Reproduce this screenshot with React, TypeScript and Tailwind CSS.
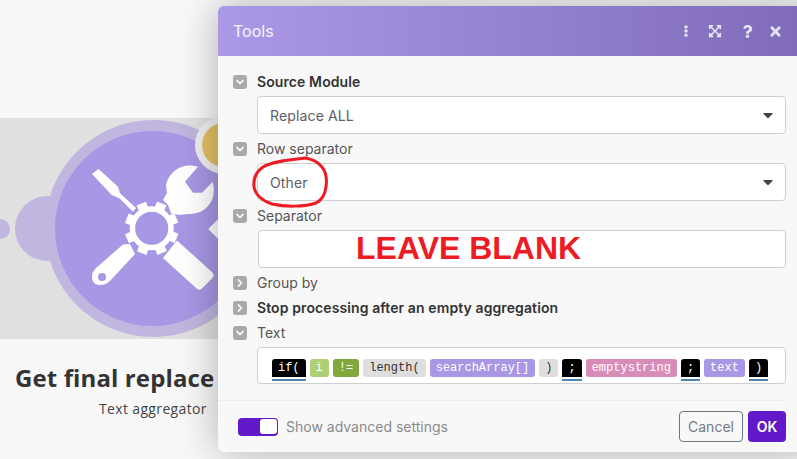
import { ChevronDown, ChevronRight } from "lucide-react"
import { FaCaretDown, FaEllipsisV, FaExpandArrowsAlt, FaQuestion, FaTimes } from "react-icons/fa"

const tokens = [
  { text: "if(", cls: "bg-black text-white", mark: true },
  { text: "i", cls: "bg-[#add076] text-white" },
  { text: "!=", cls: "bg-[#80a83c] text-white" },
  { text: "length(", cls: "bg-[#dedede] text-[#333]" },
  { text: "searchArray[]", cls: "bg-[#a897e4] text-white" },
  { text: ")", cls: "bg-[#dedede] text-[#333]" },
  { text: ";", cls: "bg-black text-white", mark: true },
  { text: "emptystring", cls: "bg-[#d88cb8] text-white" },
  { text: ";", cls: "bg-black text-white", mark: true },
  { text: "text", cls: "bg-[#a897e4] text-white" },
  { text: ")", cls: "bg-black text-white", mark: true },
]

function Toggle({ open }: { open: boolean }) {
  return (
    <span className="flex h-[14px] w-[14px] shrink-0 items-center justify-center rounded-[3px] bg-[#aaaaaa] text-white">
      {open ? <ChevronDown size={12} strokeWidth={3.5} /> : <ChevronRight size={12} strokeWidth={3.5} />}
    </span>
  )
}

function Label({ text, open = true, bold = false }: { text: string; open?: boolean; bold?: boolean }) {
  return (
    <div className="flex h-[25px] items-center gap-[10px]">
      <Toggle open={open} />
      <span className={`text-sm ${bold ? "font-semibold tracking-[0.1px] text-[#333]" : "text-[#555]"}`}>{text}</span>
    </div>
  )
}

function Select({ value }: { value: string }) {
  return (
    <div className="ml-6 flex h-[38px] items-center justify-between rounded-[4px] border border-[#cfcfcf] bg-white pl-3 pr-[9px] text-sm tracking-[0.14px] text-[#5c6068]">
      <span className="pt-0.5">{value}</span>
      <FaCaretDown size={16} className="text-[#444]" />
    </div>
  )
}

function ToolsIcon() {
  return (
    <svg viewBox="0 0 150 150" className="h-[150px] w-[150px]" fill="#fff">
      <path d="M12 24 L18.5 19 L38 36.7 L40 43.3 L56 58 L53 61.7 L39.3 48.3 L31.7 45 Z" />
      <path d="M43 94.5 L50 94 L55 104 L30 131 C24 137 12 137 12 127 C12 122 14 121 16 118 Z" />
      <circle cx="22" cy="127" r="4" fill="#a897e4" />
      <path d="M83 50 L87 43 L86 35 C88 24 98 16 108 15.5 C112 15.5 115 16 118 16.7 L105 31.7 L113 42.7 L122 42.7 L132.7 31.7 C135 40 134 50 128 56 C123 62 116 64 108 64 L100 65 L91 63.5 L88 55 Z" />
      <path d="M83 108 L97 90.5 L132.7 122.7 Q135 126 132 128.5 L122.5 138 Q119 141.5 116 138 Z" />
      <circle cx="71.7" cy="78.3" r="19.3" fill="none" stroke="#fff" strokeWidth="5.5" />
      {[22, 67, 112, 157, 202, 247, 292, 337].map((a) => (
        <rect key={a} x="66.7" y="51.5" width="10" height="8" transform={`rotate(${a} 71.7 78.3)`} />
      ))}
    </svg>
  )
}

export default function App() {
  return (
    <div className="relative h-[459px] w-[797px] overflow-hidden bg-[#f8f8f8] font-['Inter',sans-serif]">
      {/* scenario canvas behind the dialog */}
      <div className="absolute left-0 top-[118px] h-[221px] w-[230px] bg-[#e0e0e0]" />
      <div className="absolute left-[-10px] top-[219px] h-5 w-5 rounded-full bg-[#c0b6e0]" />
      <div className="absolute left-[15px] top-[196px] h-[65px] w-[65px] rounded-full bg-[#c0b6e0]" />
      <div className="absolute left-[45px] top-[120px] h-[217px] w-[217px] rounded-full bg-[#c0b6e0]" />
      <div className="absolute left-[55px] top-[131px] h-[195px] w-[195px] rounded-full bg-[#a897e4]" />
      <div className="absolute left-[80px] top-[150px]">
        <ToolsIcon />
      </div>
      <div className="absolute left-[195px] top-[116px] flex h-[58px] w-[58px] items-center justify-center rounded-full bg-[#f0f0f0]">
        <div className="h-11 w-11 rounded-full bg-[#e3c064]" />
      </div>
      <div className="absolute left-[212px] top-[220px] h-[18px] w-[18px] rotate-45 bg-white" />
      <div className="absolute left-[15px] top-[362px] font-['Open_Sans',sans-serif] text-2xl font-bold tracking-[0.12px] whitespace-nowrap text-[#333]">
        Get final replace
      </div>
      <div className="absolute left-[99px] top-[399px] font-['Open_Sans',sans-serif] text-sm tracking-[0.35px] whitespace-nowrap text-[#444]">
        Text aggregator
      </div>

      {/* dialog */}
      <div className="absolute left-[218px] top-[6px] w-[600px] overflow-hidden rounded-[6px] bg-[#f8f8f8] shadow-[0_0_40px_rgba(0,0,0,0.3)]">
        <div className="flex h-[50px] items-center bg-gradient-to-r from-[#ab99e8] to-[#7e6ab8] pl-[15px] text-white">
          <span className="text-base text-white/90">Tools</span>
          <div className="ml-[406px] flex items-center text-white/80">
            <FaEllipsisV size={12} />
            <FaExpandArrowsAlt size={14} className="ml-[16px]" />
            <FaQuestion size={13} className="ml-[19px]" />
            <FaTimes size={15} className="ml-[14px]" />
          </div>
        </div>

        <div className="h-[344px] w-[568px] pl-[15px] pt-[13px]">
          <Label text="Source Module" bold />
          <div className="mt-[2px]">
            <Select value="Replace ALL" />
          </div>
          <div className="mt-[2px]">
            <Label text="Row separator" />
          </div>
          <div className="mt-[2px]">
            <Select value="Other" />
          </div>
          <div className="mt-[2px]">
            <Label text="Separator" />
          </div>
          <div className="ml-[25px] mt-[2px] flex h-[38px] items-center rounded-[4px] border border-[#cfcfcf] bg-white pb-[2px] pl-[97px] font-['Liberation_Sans',sans-serif] text-[32px] leading-none font-bold text-[#ed1c24]">
            LEAVE BLANK
          </div>
          <div className="mt-[2px]">
            <Label text="Group by" open={false} />
          </div>
          <Label text="Stop processing after an empty aggregation" open={false} bold />
          <Label text="Text" />
          <div className="ml-6 mt-[2px] flex h-[37px] items-start gap-1 rounded-[4px] border border-[#cfcfcf] bg-white pl-[14px] pt-[11px] font-['Liberation_Mono',monospace] text-xs">
            {tokens.map((t, i) => (
              <span
                key={i}
                className={`flex h-[18px] items-center rounded-[3px] px-1.5 leading-none whitespace-nowrap ${t.cls} ${
                  t.mark ? "rounded-b-none shadow-[0_2px_0_#fff,0_4px_0_#4f87b0]" : ""
                }`}
              >
                {t.text}
              </span>
            ))}
          </div>
        </div>

        <div className="flex h-[52px] w-[568px] items-center justify-between border-t border-[#ececec] pl-5">
          <div className="flex items-center gap-2">
            <div className="flex h-[18px] w-10 items-center justify-end rounded-[4px] bg-[#6119c9] pr-[1px]">
              <div className="h-[15px] w-[17px] rounded-[3px] bg-white" />
            </div>
            <span className="text-sm text-[#8a8a8a]">Show advanced settings</span>
          </div>
          <div className="flex items-center gap-[5px]">
            <button className="h-[31px] w-[64px] rounded-[4px] border border-[#6e7480] text-sm text-[#767b85]">Cancel</button>
            <button className="h-[31px] w-[38px] rounded-[4px] bg-[#6119c9] text-sm font-semibold text-white">OK</button>
          </div>
        </div>
      </div>

      {/* hand-drawn annotation over the select */}
      <svg className="absolute left-0 top-0 h-[459px] w-[797px]" fill="none">
        <path
          d="M305 158 C312 159 318 162 322 167 C326 172 327 180 326 187 C325 195 322 200 316 203 C305 207 285 207 272 204 C262 201 255 194 254 187 C253 179 256 172 263 167 C273 161 290 160 305 158 Z"
          stroke="#ed1c24"
          strokeWidth="3"
        />
      </svg>
    </div>
  )
}
